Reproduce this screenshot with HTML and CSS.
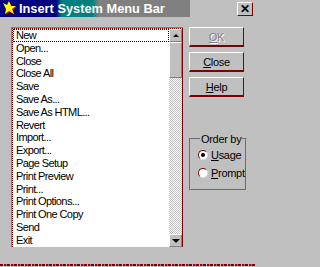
FILE: index.html
```html
<!DOCTYPE html>
<html>
<head>
<meta charset="utf-8">
<link rel="stylesheet" href="styles.css">
</head>
<body>
<div class="window">
  <div class="titlebar">
    <div class="caption">
      <svg class="appicon" width="15" height="15" viewBox="0 0 15 15">
        <polygon points="1,3 5,5 7,1 9,6 14,6 10,9 12,14 7,11 3,14 4,9" fill="#c00000"/>
        <polygon points="0,2 4,4 6,0 8,5 13,5 9,8 11,13 6,10 2,13 3,8" fill="#ffff00"/>
      </svg>
      <span class="title">Insert System Menu Bar</span>
    </div>
    <div class="closebox">✕</div>
  </div>
  <div class="content">
    <div class="listbox">
      <div class="listinner">
        <div class="items">
          <div class="item focus">New</div>
          <div class="item">Open...</div>
          <div class="item">Close</div>
          <div class="item">Close All</div>
          <div class="item">Save</div>
          <div class="item">Save As...</div>
          <div class="item">Save As HTML...</div>
          <div class="item">Revert</div>
          <div class="item">Import...</div>
          <div class="item">Export...</div>
          <div class="item">Page Setup</div>
          <div class="item">Print Preview</div>
          <div class="item">Print...</div>
          <div class="item">Print Options...</div>
          <div class="item">Print One Copy</div>
          <div class="item">Send</div>
          <div class="item">Exit</div>
        </div>
        <div class="scroll">
          <div class="sbtn"><span class="tri-up"></span></div>
          <div class="thumb"></div>
          <div class="track"></div>
          <div class="sbtn"><span class="tri-down"></span></div>
        </div>
      </div>
    </div>
    <div class="side">
      <div class="btn disabled"><span><u>O</u>K</span></div>
      <div class="btn"><span><u>C</u>lose</span></div>
      <div class="btn"><span><u>H</u>elp</span></div>
      <fieldset class="group">
        <legend>Order by</legend>
        <div class="radio"><span class="dot checked"></span><span><u>U</u>sage</span></div>
        <div class="radio"><span class="dot"></span><span><u>P</u>rompt</span></div>
      </fieldset>
    </div>
  </div>
  <div class="bottomline"></div>
</div>
</body>
</html>
```
FILE: styles.css
```css
html, body {
  margin: 0;
  padding: 0;
  background: #c0c0c0;
}
.window {
  width: 255px;
  height: 267px;
  display: flex;
  flex-direction: column;
  background: #c0c0c0;
  font-family: "Liberation Sans", Arial, sans-serif;
  color: #000;
  overflow: hidden;
}
.titlebar {
  height: 17px;
  display: flex;
  align-items: flex-start;
  flex: none;
}
.caption {
  width: 190px;
  height: 17px;
  display: flex;
  align-items: center;
  background: linear-gradient(to right, #000080 0, #000080 56px, #008080 62px, #008080 92px, #808080 99px, #808080 190px);
}
.appicon {
  margin-left: 3px;
  margin-right: 1px;
  flex: none;
}
.title {
  color: #fff;
  font-weight: bold;
  font-size: 12.8px;
  white-space: nowrap;
}
.closebox {
  margin-left: auto;
  margin-right: 2px;
  margin-top: 2px;
  width: 14px;
  height: 12px;
  border-top: 1px solid #fff;
  border-left: 1px solid #fff;
  border-right: 1px solid #800000;
  border-bottom: 1px solid #800000;
  display: flex;
  align-items: center;
  justify-content: center;
  font-size: 12px;
  font-weight: bold;
  line-height: 1;
}
.content {
  display: flex;
  padding: 10px 0 0 11px;
}
.listbox {
  width: 171px;
  height: 219px;
  border-top: 1px solid #808080;
  border-left: 1px solid #808080;
  display: flex;
}
.listinner {
  flex: 1;
  display: flex;
  border-top: 1px dotted #800000;
  border-left: 1px dotted #800000;
  border-right: 1px solid #800000;
}
.items {
  flex: 1;
  background: #fff;
  padding-top: 0;
}
.item {
  height: 12.8px;
  line-height: 12.8px;
  font-size: 11px;
  letter-spacing: -0.6px;
  padding-left: 3px;
  white-space: nowrap;
}
.item.focus {
  outline: 1px dotted #000;
  outline-offset: -1px;
}
.scroll {
  width: 13px;
  display: flex;
  flex-direction: column;
}
.sbtn, .thumb {
  box-sizing: border-box;
  background: #c0c0c0;
  border-top: 1px solid #fff;
  border-left: 1px solid #fff;
  border-right: 1px solid #808080;
  border-bottom: 1px solid #808080;
}
.sbtn {
  height: 13px;
  display: flex;
  align-items: center;
  justify-content: center;
  flex: none;
}
.thumb {
  height: 36px;
  flex: none;
}
.track {
  flex: 1;
  background-color: #fff;
  background-image:
    linear-gradient(45deg, #c0c0c0 25%, transparent 25%, transparent 75%, #c0c0c0 75%),
    linear-gradient(45deg, #c0c0c0 25%, transparent 25%, transparent 75%, #c0c0c0 75%);
  background-size: 2px 2px;
  background-position: 0 0, 1px 1px;
}
.tri-up {
  width: 0;
  height: 0;
  border-left: 3px solid transparent;
  border-right: 3px solid transparent;
  border-bottom: 3px solid #000;
}
.tri-down {
  width: 0;
  height: 0;
  border-left: 4px solid transparent;
  border-right: 4px solid transparent;
  border-top: 4px solid #000;
}
.side {
  margin-left: 6px;
  width: 55px;
  display: flex;
  flex-direction: column;
  gap: 5px;
}
.btn {
  box-sizing: border-box;
  height: 20px;
  border-top: 1px solid #fff;
  border-left: 1px solid #fff;
  border-right: 1px solid #800000;
  border-bottom: 2px solid #800000;
  display: flex;
  align-items: center;
  justify-content: center;
  font-size: 11px;
  letter-spacing: -0.3px;
}
.btn.disabled {
  color: #808080;
  text-shadow: 1px 1px 0 #fff;
}
.group {
  margin: 31px 0 0 0;
  padding: 3px 0 6px 7px;
  border: 2px groove #c0c0c0;
  height: 45px;
  box-sizing: content-box;
}
.group legend {
  font-size: 11px;
  letter-spacing: -0.3px;
  padding: 0 1px;
  margin-left: 2px;
}
.radio {
  display: flex;
  align-items: center;
  gap: 3px;
  height: 13px;
  margin-bottom: 5px;
  font-size: 11px;
  letter-spacing: -0.3px;
}
.dot {
  box-sizing: border-box;
  width: 10px;
  height: 10px;
  border-radius: 50%;
  background: #fff;
  border-top: 1px solid #800000;
  border-left: 1px solid #800000;
  border-right: 1px solid #dfdfdf;
  border-bottom: 1px solid #dfdfdf;
  display: flex;
  align-items: center;
  justify-content: center;
  flex: none;
}
.dot.checked::after {
  content: "";
  width: 4px;
  height: 4px;
  border-radius: 50%;
  background: #000;
}
.bottomline {
  margin-top: auto;
  margin-bottom: 1px;
  height: 2px;
  background: repeating-linear-gradient(to right, #800000 0, #800000 3px, #c0c0c0 3px, #c0c0c0 4px, #a00000 4px, #a00000 6px, #808080 6px, #808080 7px);
}
```
